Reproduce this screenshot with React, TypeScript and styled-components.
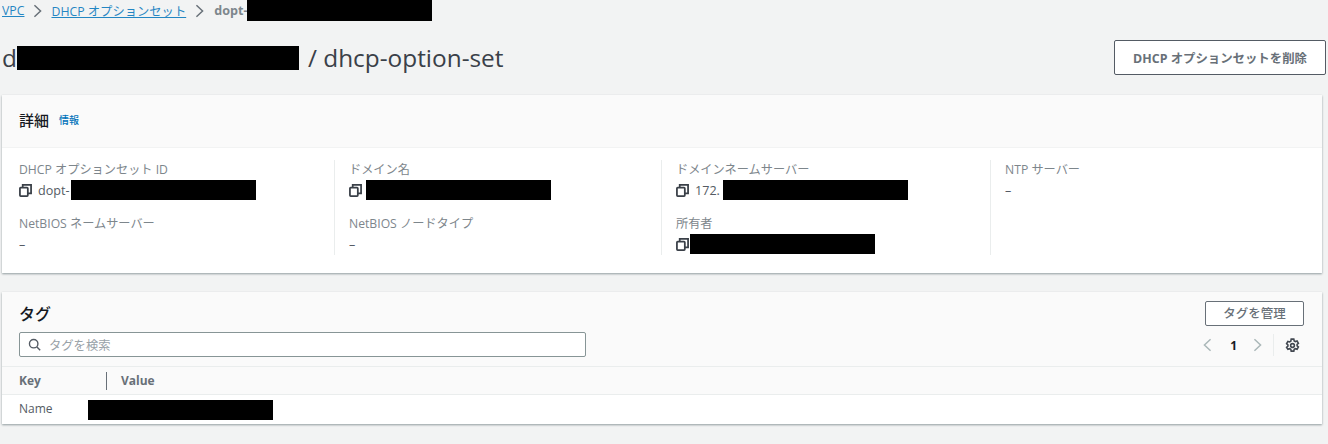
import React from 'react';
import styled, { createGlobalStyle } from 'styled-components';

const GlobalStyle = createGlobalStyle`
  html, body {
    margin: 0;
    padding: 0;
    background: #f2f3f3;
    font-family: "Open Sans", "Noto Sans CJK JP", sans-serif;
    color: #545b64;
  }
`;

const fields = [
  [
    { label: 'DHCP オプションセット ID', value: 'dopt-', bar: 185, copy: true, pull: -1 },
    { label: 'NetBIOS ネームサーバー', value: '–' },
  ],
  [
    { label: 'ドメイン名', value: '', bar: 185, copy: true, pull: 2 },
    { label: 'NetBIOS ノードタイプ', value: '–' },
  ],
  [
    { label: 'ドメインネームサーバー', value: '172.', bar: 185, copy: true, pull: -3 },
    { label: '所有者', value: '', bar: 185, copy: true, pull: 5 },
  ],
  [{ label: 'NTP サーバー', value: '–' }],
];

const CopyIcon = () => (
  <CopySvg viewBox="0 0 14 14" width="13" height="13" fill="none" stroke="#3a4048" strokeWidth="1.9">
    <rect x="1" y="4" width="8.5" height="9" rx="0.8" />
    <path d="M4 4V1h9v9h-3.5" />
  </CopySvg>
);

const Chevron = ({ dir, color }: { dir: 'left' | 'right'; color: string }) => (
  <svg viewBox="0 0 10 16" width="9" height="14" fill="none" stroke={color} strokeWidth="1.7">
    <path d={dir === 'right' ? 'M1.5 1.5 8.5 8l-7 6.5' : 'M8.5 1.5 1.5 8l7 6.5'} />
  </svg>
);

const App = () => {
  return (
    <Page>
      <GlobalStyle />
      <Breadcrumbs>
        <Crumb>VPC</Crumb>
        <Chevron dir="right" color="#687078" />
        <Crumb>DHCP オプションセット</Crumb>
        <Chevron dir="right" color="#687078" />
        <Current>
          dopt-
          <Redacted $w={185} $h={21} />
        </Current>
      </Breadcrumbs>

      <TitleRow>
        <Title>
          d
          <Redacted $w={282} $h={24} />
          <TitleRest>/ dhcp-option-set</TitleRest>
        </Title>
        <DeleteButton>DHCP オプションセットを削除</DeleteButton>
      </TitleRow>

      <Panel>
        <PanelHeader>
          <PanelTitle>詳細</PanelTitle>
          <InfoLink>情報</InfoLink>
        </PanelHeader>
        <DetailGrid>
          {fields.map((col, i) => (
            <DetailColumn key={i} $first={i === 0}>
              {col.map((f) => (
                <Field key={f.label}>
                  <FieldLabel>{f.label}</FieldLabel>
                  <FieldValue>
                    {f.copy && <CopyIcon />}
                    {f.value && <span>{f.value}</span>}
                    {f.bar && <Redacted $w={f.bar} $h={20} $pull={f.pull} />}
                  </FieldValue>
                </Field>
              ))}
            </DetailColumn>
          ))}
        </DetailGrid>
      </Panel>

      <TagPanel>
        <TagHeader>
          <TagHeaderLeft>
            <TagTitle>タグ</TagTitle>
            <SearchBox>
              <svg viewBox="0 0 16 16" width="13" height="13" fill="none" stroke="#545b64" strokeWidth="1.7">
                <circle cx="7" cy="7" r="5.2" />
                <path d="m11 11 4 4" />
              </svg>
              <SearchHint>タグを検索</SearchHint>
            </SearchBox>
          </TagHeaderLeft>
          <TagHeaderRight>
            <ManageButton>タグを管理</ManageButton>
            <Pager>
              <Chevron dir="left" color="#aab7b8" />
              <PageNumber>1</PageNumber>
              <Chevron dir="right" color="#aab7b8" />
              <PagerDivider />
              <svg viewBox="0 0 16 16" width="15" height="15" fill="none" stroke="#414750" strokeWidth="1.7">
                <path d="M6.6 1.2h2.8l.4 1.9 1.3.7 1.8-.6 1.4 2.4-1.4 1.3v1.4l1.4 1.3-1.4 2.4-1.8-.6-1.3.7-.4 1.9H6.6l-.4-1.9-1.3-.7-1.8.6L1.7 10l1.4-1.3V7.3L1.7 6l1.4-2.4 1.8.6 1.3-.7z" />
                <circle cx="8" cy="8" r="2" />
              </svg>
            </Pager>
          </TagHeaderRight>
        </TagHeader>
        <TableHead>
          <KeyHead>Key</KeyHead>
          <HeadDivider />
          <ValueHead>Value</ValueHead>
        </TableHead>
        <TableRow>
          <NameCell>Name</NameCell>
          <Redacted $w={185} $h={20} />
        </TableRow>
      </TagPanel>
    </Page>
  );
};

const Page = styled.div`
  width: 1328px;
  height: 444px;
  overflow: hidden;
  box-sizing: border-box;
  padding: 0 2px 0 2px;
`;

const Redacted = styled.span<{ $w: number; $h: number; $pull?: number }>`
  display: inline-block;
  flex: none;
  width: ${(p) => p.$w}px;
  height: ${(p) => p.$h}px;
  background: #000;
  margin-left: ${(p) => -(p.$pull ?? 0)}px;
`;

const Breadcrumbs = styled.nav`
  display: flex;
  align-items: center;
  height: 21px;
  font-size: 12.3px;
  gap: 9px;
`;

const Crumb = styled.a`
  color: #0073bb;
  text-decoration: underline;
  opacity: 0.85;
`;

const Current = styled.span`
  display: flex;
  align-items: center;
  margin-left: 1px;
  font-size: 12.6px;
  font-weight: 700;
  color: #7d868c;
`;

const TitleRow = styled.div`
  display: flex;
  align-items: center;
  justify-content: space-between;
  height: 74px;
  box-sizing: border-box;
  padding-bottom: 1px;
`;

const Title = styled.h1`
  display: flex;
  align-items: center;
  margin: 0;
  font-size: 24.4px;
  font-weight: 400;
  color: #3a4048;
`;

const TitleRest = styled.span`
  margin-left: 9px;
`;

const DeleteButton = styled.button`
  width: 212px;
  height: 35px;
  box-sizing: border-box;
  background: #fff;
  border: 1px solid #545b64;
  border-radius: 2px;
  font: 700 12.4px "Open Sans", "Noto Sans CJK JP", sans-serif;
  color: #687078;
`;

const Panel = styled.section`
  width: 1320px;
  background: #fff;
  box-shadow: 0 1px 2px rgba(0, 28, 36, 0.4);
`;

const PanelHeader = styled.header`
  display: flex;
  align-items: center;
  gap: 10px;
  height: 53px;
  box-sizing: border-box;
  padding: 0 0 4px 17px;
  background: #fafafa;
  border-bottom: 1px solid #f2f3f3;
`;

const PanelTitle = styled.h2`
  margin: 0;
  font-size: 15px;
  font-weight: 500;
  color: #16191f;
`;

const InfoLink = styled.a`
  font-size: 10px;
  font-weight: 500;
  color: #0073bb;
`;

const DetailGrid = styled.div`
  display: grid;
  grid-template-columns: 332px 327px 329px 1fr;
  padding: 12px 0 18px;
`;

const DetailColumn = styled.div<{ $first: boolean }>`
  display: flex;
  flex-direction: column;
  gap: 14px;
  height: 95px;
  padding-left: ${(p) => (p.$first ? '17px' : '14px')};
  border-left: ${(p) => (p.$first ? 'none' : '1px solid #eaeded')};
`;

const Field = styled.div`
  display: flex;
  flex-direction: column;
`;

const FieldLabel = styled.div`
  height: 20px;
  line-height: 20px;
  font-size: 12.2px;
  color: #7d868c;
`;

const FieldValue = styled.div`
  display: flex;
  align-items: center;
  height: 20px;
  font-size: 12.6px;
  color: #545b64;
`;

const CopySvg = styled.svg`
  flex: none;
  margin-right: 6px;
`;

const TagPanel = styled(Panel)`
  margin-top: 19px;
`;

const TagHeader = styled.header`
  display: flex;
  justify-content: space-between;
  height: 74px;
  box-sizing: border-box;
  padding: 9px 18px 0 17px;
  background: #fafafa;
`;

const TagHeaderLeft = styled.div`
  display: flex;
  flex-direction: column;
  gap: 8px;
`;

const TagTitle = styled.h2`
  margin: 0;
  height: 23px;
  line-height: 26px;
  font-size: 16px;
  font-weight: 500;
  color: #16191f;
`;

const SearchBox = styled.div`
  display: flex;
  align-items: center;
  gap: 8px;
  width: 567px;
  height: 25px;
  box-sizing: border-box;
  padding-left: 8px;
  background: #fff;
  border: 1px solid #879596;
  border-radius: 2px;
`;

const SearchHint = styled.span`
  font-size: 12.3px;
  color: #99a2a8;
`;

const TagHeaderRight = styled.div`
  display: flex;
  flex-direction: column;
  align-items: flex-end;
  gap: 7px;
`;

const ManageButton = styled.button`
  width: 99px;
  height: 25px;
  box-sizing: border-box;
  padding: 0 0 3px;
  background: #fff;
  border: 1px solid #687078;
  border-radius: 2px;
  font: 500 12.5px "Open Sans", "Noto Sans CJK JP", sans-serif;
  color: #687078;
`;

const Pager = styled.div`
  display: flex;
  align-items: center;
  gap: 18px;
  height: 24px;
  margin-right: 4px;
`;

const PageNumber = styled.span`
  margin-right: -2px;
  font-size: 12px;
  font-weight: 700;
  color: #16191f;
`;

const PagerDivider = styled.span`
  width: 1px;
  height: 22px;
  margin: 0 -7px;
  background: #eaeded;
`;

const TableHead = styled.div`
  display: flex;
  align-items: center;
  height: 29px;
  box-sizing: border-box;
  padding-left: 17px;
  background: #fafafa;
  border-top: 1px solid #eaeded;
  border-bottom: 1px solid #eaeded;
  font-size: 12px;
  font-weight: 700;
  color: #687078;
`;

const KeyHead = styled.span`
  width: 87px;
`;

const HeadDivider = styled.span`
  width: 1px;
  height: 18px;
  background: #687078;
`;

const ValueHead = styled.span`
  margin-left: 14px;
`;

const TableRow = styled.div`
  display: flex;
  align-items: center;
  height: 29px;
  padding-left: 17px;
  font-size: 12px;
  color: #545b64;
  background: #fff;
`;

const NameCell = styled.span`
  width: 69px;
  margin-top: -3px;
`;

export default App;
